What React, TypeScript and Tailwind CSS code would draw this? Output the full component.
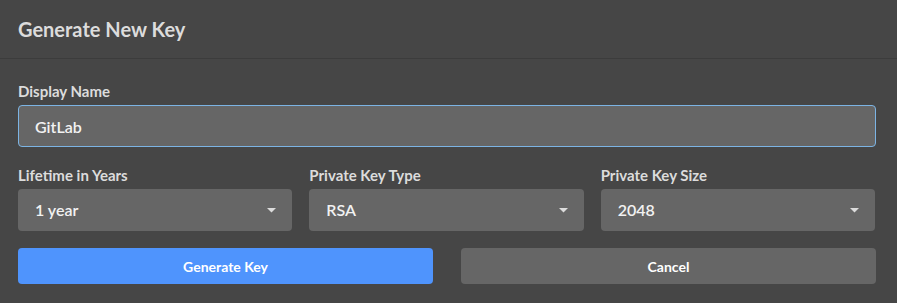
import { useState } from "react";

function Caret() {
    return (
        <svg width="9" height="5" viewBox="0 0 9 5" className="shrink-0">
            <path d="M0 0 L9 0 L4.5 4.5 Z" fill="#dcdcdc" />
        </svg>
    );
}

function SelectField({ label, value }: { label: string; value: string }) {
    return (
        <label className="flex flex-col">
            <span className="text-[15px] font-bold text-[#dcdcdc] leading-[18px] mb-[5px]">{label}</span>
            <div className="h-[42px] rounded-[4px] bg-[#666666] flex items-center justify-between pl-[17px] pr-[16px]">
                <span className="text-[16px] font-semibold text-[#f2f2f2]">{value}</span>
                <Caret />
            </div>
        </label>
    );
}

export default function App() {
    const [name, setName] = useState("GitLab");
    return (
        <div className="w-[897px] h-[303px] bg-[#464646] font-['Lato',sans-serif]">
            <div className="h-[59px] border-b border-[#3c3c3c] px-[18px] flex items-center">
                <h1 className="text-[20px] font-bold text-[#dcdcdc] mb-[1px]">Generate New Key</h1>
            </div>
            <div className="px-[18px] pt-[23px] pr-[21px]">
                <label className="flex flex-col">
                    <span className="text-[15px] font-bold text-[#dcdcdc] leading-[18px] mb-[5px]">Display Name</span>
                    <input
                        value={name}
                        onChange={(e) => setName(e.target.value)}
                        className="h-[42px] rounded-[4px] bg-[#666666] border border-[#7cb4e4] px-[16px] text-[16px] font-semibold text-[#f2f2f2] outline-none"
                    />
                </label>
                <div className="grid grid-cols-3 gap-[17px] mt-[19px] pr-[1px]">
                    <SelectField label="Lifetime in Years" value="1 year" />
                    <SelectField label="Private Key Type" value="RSA" />
                    <SelectField label="Private Key Size" value="2048" />
                </div>
                <div className="grid grid-cols-2 gap-[28px] mt-[17px]">
                    <button className="h-[36px] rounded-[4px] bg-[#4f94fd] text-white text-[14px] font-bold">Generate Key</button>
                    <button className="h-[36px] rounded-[4px] bg-[#666666] text-white text-[14px] font-bold">Cancel</button>
                </div>
            </div>
        </div>
    );
}
